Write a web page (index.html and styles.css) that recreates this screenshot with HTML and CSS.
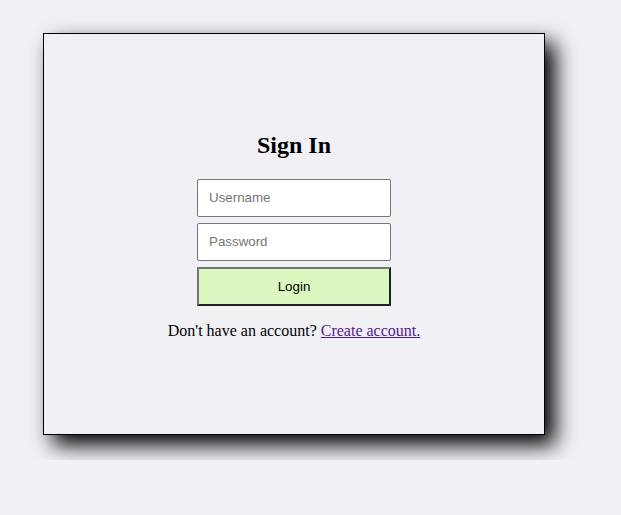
FILE: index.html
```html
<!DOCTYPE html>
<html>
<head>
<meta charset="utf-8">
<link rel="stylesheet" href="styles.css">
</head>
<body>
<div class="page">
  <div class="card">
    <h2 class="title">Sign In</h2>
    <form class="form">
      <input class="field" type="text" placeholder="Username">
      <input class="field" type="password" placeholder="Password">
      <button class="btn" type="button">Login</button>
    </form>
    <p class="note">Don't have an account? <a class="link" href="#">Create account.</a></p>
  </div>
</div>
</body>
</html>
```
FILE: styles.css
```css
html, body {
  background: #f0f0f5;
}
body {
  margin: 8px;
  font-family: "Liberation Serif", serif;
}
.page {
  padding: 25px 35px;
}
.card {
  box-sizing: border-box;
  width: 502px;
  height: 402px;
  border: 1px solid #000;
  background: #f0f0f5;
  box-shadow: 10px 10px 20px #000;
  display: flex;
  flex-direction: column;
  align-items: center;
  justify-content: center;
}
.title {
  font-size: 24px;
  font-weight: bold;
  margin: 20px 0 20px;
  line-height: normal;
}
.form {
  display: flex;
  flex-direction: column;
  gap: 6px;
  margin: 0;
}
.field {
  box-sizing: border-box;
  width: 194px;
  height: 38px;
  margin: 0;
  padding: 0 11px;
  border: 1px solid #767676;
  border-radius: 2px;
  background: #fff;
  font-family: "Liberation Sans", Arial, sans-serif;
  font-size: 13.33px;
  color: #000;
}
.field::placeholder {
  color: #757575;
}
.btn {
  box-sizing: border-box;
  width: 194px;
  height: 39px;
  margin: 0;
  border: 2px solid;
  border-color: #767676 #222 #222 #767676;
  background: #dbf8c0;
  font-family: "Liberation Sans", Arial, sans-serif;
  font-size: 13.33px;
  color: #000;
}
.note {
  margin: 16px 0 17px;
  font-size: 16px;
}
.link {
  color: #551a8b;
}
```
